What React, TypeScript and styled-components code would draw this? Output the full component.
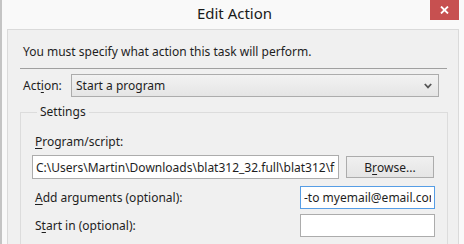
import React from 'react';
import styled, { createGlobalStyle } from 'styled-components';

const font = `"Noto Sans", "Open Sans", "Liberation Sans", sans-serif`;

const GlobalStyle = createGlobalStyle`
  html, body {
    margin: 0;
    padding: 0;
    background: #f9f9f9;
    overflow: hidden;
  }
  body {
    font-family: ${font};
    font-size: 12px;
    color: #1e1e1e;
  }
`;

const Window = styled.div`
  width: 464px;
  height: 244px;
  box-sizing: border-box;
  border-left: 2px solid #c4c4c4;
  background: #f9f9f9;
  display: flex;
  flex-direction: column;
  overflow: hidden;
`;

const TitleBar = styled.div`
  position: relative;
  height: 29px;
  display: flex;
  justify-content: center;
  flex: 0 0 29px;
`;

const Title = styled.div`
  font-size: 15px;
  line-height: 20px;
  color: #1a1a1a;
  margin-left: 3px;
  margin-top: 3px;
`;

const CloseButton = styled.div`
  position: absolute;
  top: 0;
  right: 5px;
  width: 29px;
  height: 20px;
  background: #c75050;
  display: flex;
  align-items: center;
  justify-content: center;
`;

const Client = styled.div`
  margin-left: 5px;
  width: 452px;
  flex: 1;
  box-sizing: border-box;
  border: 1px solid #dadada;
  border-bottom: none;
  background: #f0f0f0;
  padding: 13px 10px 0 12px;
  display: flex;
  flex-direction: column;
`;

const Intro = styled.div`
  padding-left: 3px;
  line-height: 17px;
`;

const Separator = styled.div`
  height: 1px;
  width: 427px;
  background: #a0a0a0;
  margin-top: 8px;
`;

const Row = styled.div<{ $top?: number }>`
  display: flex;
  align-items: center;
  margin-top: ${(p) => p.$top ?? 0}px;
`;

const Label = styled.div<{ $width?: number }>`
  width: ${(p) => (p.$width ? `${p.$width}px` : 'auto')};
  flex: 0 0 auto;
  line-height: 16px;
  padding-left: 3px;
`;

const Key = styled.span`
  text-decoration: underline;
  text-underline-offset: 2px;
`;

const Combo = styled.div`
  width: 368px;
  height: 23px;
  box-sizing: border-box;
  border: 1px solid #acacac;
  background: linear-gradient(#f2f2f2, #e5e5e5);
  display: flex;
  align-items: center;
  justify-content: space-between;
  padding: 0 6px 0 4px;
`;

const Group = styled.fieldset`
  margin: 7px 0 0 0;
  width: 428px;
  box-sizing: border-box;
  border: 1px solid #dcdcdc;
  border-bottom: none;
  padding: 14px 0 20px 11px;
  min-width: 0;
`;

const Legend = styled.legend`
  padding: 0 3px;
  margin-left: 5px;
  font-size: 12px;
  line-height: 16px;
`;

const Field = styled.div`
  display: flex;
  flex-direction: column;
`;

const Input = styled.input<{ $width: number; $height?: number; $focus?: boolean }>`
  flex: none;
  width: ${(p) => p.$width}px;
  height: ${(p) => p.$height ?? 23}px;
  box-sizing: border-box;
  margin: 0;
  border: 1px solid ${(p) => (p.$focus ? '#569de5' : '#acacac')};
  border-radius: 0;
  outline: none;
  background: #fff;
  padding: 0 3px;
  font-family: ${font};
  font-size: 12px;
  color: #1e1e1e;
`;

const Button = styled.div`
  flex: none;
  width: 88px;
  height: 22px;
  box-sizing: border-box;
  border: 1px solid #acacac;
  background: linear-gradient(#f0f0f0, #e5e5e5);
  display: flex;
  align-items: center;
  justify-content: center;
  margin-left: 7px;
`;

const ArgRow = styled.div<{ $top: number }>`
  display: flex;
  align-items: center;
  justify-content: space-between;
  width: 403px;
  margin-top: ${(p) => p.$top}px;
`;

export default function App() {
  return (
    <>
      <GlobalStyle />
      <Window>
        <TitleBar>
          <Title>Edit Action</Title>
          <CloseButton>
            <svg width="9" height="8" viewBox="0 0 9 8">
              <path d="M1 0.5 L8 7.5 M8 0.5 L1 7.5" stroke="#fff" strokeWidth="1.8" />
            </svg>
          </CloseButton>
        </TitleBar>
        <Client>
          <Intro>You must specify what action this task will perform.</Intro>
          <Separator />
          <Row $top={5}>
            <Label $width={48}>
              Act<Key>i</Key>on:
            </Label>
            <Combo>
              <span>Start a program</span>
              <svg width="8" height="6" viewBox="0 0 8 6">
                <path d="M0.8 1 L4 4.4 L7.2 1" stroke="#555" strokeWidth="1.8" fill="none" />
              </svg>
            </Combo>
          </Row>
          <Group>
            <Legend>Settings</Legend>
            <Field>
              <Label>
                <Key>P</Key>rogram/script:
              </Label>
              <Row $top={5}>
                <Input
                  $width={307}
                  $height={24}
                  readOnly
                  value="C:\Users\Martin\Downloads\blat312_32.full\blat312\full\blat.exe"
                />
                <Button>
                  B<Key>r</Key>owse...
                </Button>
              </Row>
            </Field>
            <ArgRow $top={7}>
              <Label>
                <Key>A</Key>dd arguments (optional):
              </Label>
              <Input $width={135} $focus readOnly value="-to myemail@email.com" />
            </ArgRow>
            <ArgRow $top={5}>
              <Label>
                S<Key>t</Key>art in (optional):
              </Label>
              <Input $width={135} readOnly value="" />
            </ArgRow>
          </Group>
        </Client>
      </Window>
    </>
  );
}
